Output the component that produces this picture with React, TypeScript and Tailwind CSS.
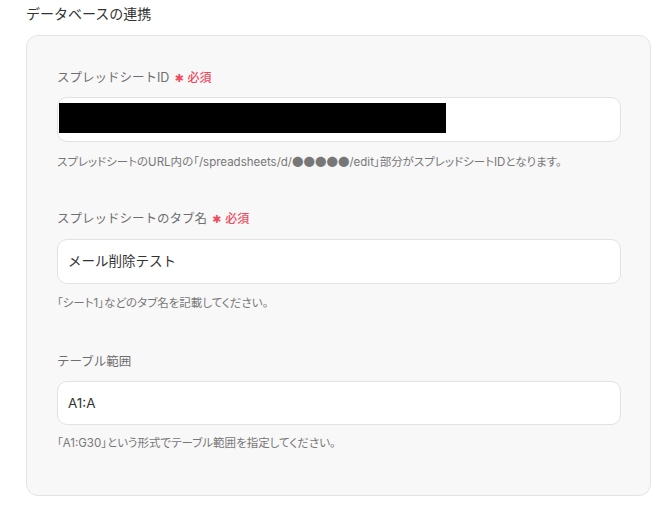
const font = "font-['Inter','Noto_Sans_CJK_JP',sans-serif]"

function Required() {
    return (
        <span className="ml-[5px] inline-flex items-center text-[#f04b5f]">
            <span className="text-[11px] leading-none font-['DejaVu_Sans',sans-serif]">✱</span>
            <span className="ml-[4px] text-[12px] font-medium">必須</span>
        </span>
    )
}

function Field({ label, required, help, children, className }: {
    label: string
    required?: boolean
    help: React.ReactNode
    children: React.ReactNode
    className?: string
}) {
    return (
        <div className={className}>
            <div className="h-[18px] flex items-center text-[12.5px] text-[#6e6e6e]">
                {label}
                {required && <Required />}
            </div>
            {children}
            <p className="h-[14px] leading-[14px] text-[11.5px] text-[#777777] [font-feature-settings:'palt']">{help}</p>
        </div>
    )
}

const dots = <span className="font-['Noto_Sans_CJK_JP',sans-serif]">●●●●●</span>

export default function App() {
    return (
        <div className={`w-[670px] h-[514px] bg-white ${font}`}>
            <h2 className="pl-[26px] pt-[4px] h-[35px] text-[14px] leading-[20px] text-[#333333]">
                データベースの連携
            </h2>
            <section className="ml-[26px] w-[625px] h-[461px] rounded-[12px] border border-[#e3e3e3] bg-[#f8f8f8] px-[30px] pt-[33px]">
                <Field label="スプレッドシートID" required help={<>スプレッドシートのURL内の「/spreadsheets/d/{dots}/edit」部分がスプレッドシートIDとなります。</>}>
                    <div className="mt-[10px] mb-[12px] h-[45px] w-[564px] rounded-[10px] border border-[#e2e2e6] bg-white pl-[1px] pt-[5px]">
                        <div className="h-[30px] w-[387px] bg-black" />
                    </div>
                </Field>
                <Field className="mt-[42px]" label="スプレッドシートのタブ名" required help="「シート1」などのタブ名を記載してください。">
                    <div className="mt-[11px] mb-[12px] h-[45px] w-[564px] rounded-[10px] border border-[#e2e2e6] bg-white px-[10px] flex items-center text-[13.5px] text-[#333333]">
                        メール削除テスト
                    </div>
                </Field>
                <Field className="mt-[43px]" label="テーブル範囲" help="「A1:G30」という形式でテーブル範囲を指定してください。">
                    <div className="mt-[10px] mb-[11px] h-[44px] w-[564px] rounded-[10px] border border-[#e2e2e6] bg-white px-[10px] flex items-center text-[13.5px] text-[#333333]">
                        A1:A
                    </div>
                </Field>
            </section>
        </div>
    )
}
